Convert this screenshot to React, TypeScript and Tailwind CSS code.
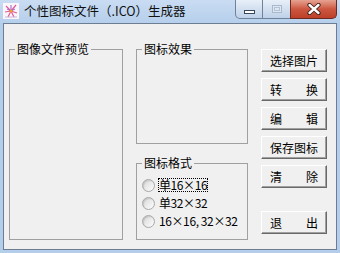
const buttons: { label: string[]; gapBefore?: boolean }[] = [
  { label: ['选择图片'] },
  { label: ['转', '换'] },
  { label: ['编', '辑'] },
  { label: ['保存图标'] },
  { label: ['清', '除'] },
  { label: ['退', '出'], gapBefore: true },
];

const radios = ['单16×16', '单32×32', '16×16, 32×32'];

function TitleIcon() {
  return (
    <svg width="16" height="16" viewBox="0 0 16 16">
      <rect width="16" height="16" fill="#fbf6f9" />
      <path d="M8 8 L3 3 M8 8 L13 2 M8 8 L2 9 M8 8 L14 10 M8 8 L5 14 M8 8 L11 14" stroke="#e05a9a" strokeWidth="1.2" />
      <path d="M8 8 L8 2 M8 8 L4 6 M8 8 L12 6" stroke="#9a5ad0" strokeWidth="1" />
      <circle cx="8" cy="8" r="1.6" fill="#f0a030" />
      <path d="M2 14 L14 14" stroke="#c9b6d8" strokeWidth="1" />
    </svg>
  );
}

function GroupBox({ title, className, children }: { title: string; className: string; children?: React.ReactNode }) {
  return (
    <fieldset className={`border border-[#a0a0a0] ${className}`}>
      <legend className="ml-[5px] px-[2px] text-[12px] leading-[14px]">{title}</legend>
      {children}
    </fieldset>
  );
}

export default function App() {
  return (
    <div className="w-[340px] h-[253px] overflow-hidden flex flex-col bg-[#b4cdeb] font-['Noto_Sans_CJK_SC',sans-serif] text-black">
      {/* Title bar */}
      <div className="h-[23px] flex items-start bg-gradient-to-b from-[#c9dcf2] to-[#b6cfec]">
        <div className="ml-[3px] mt-[3px]">
          <TitleIcon />
        </div>
        <span className="ml-[5px] mt-[3px] text-[12.5px] leading-[16px] text-[#101010]">
          个性图标文件（.ICO）生成器
        </span>
        <div className="ml-auto mr-[3px] flex h-[19px]">
          <div className="w-[28px] h-full rounded-bl-[5px] border border-t-0 border-[#6f829b] bg-gradient-to-b from-[#e8eff8] via-[#d3e0f0] to-[#bfd1e8] flex items-center justify-center">
            <span className="block w-[11px] h-[4px] mt-[5px] bg-white border border-[#38475a]" />
          </div>
          <div className="w-[27px] h-full border-b border-[#6f829b] bg-gradient-to-b from-[#e8eff8] via-[#d3e0f0] to-[#bfd1e8] flex items-center justify-center">
            <span className="block w-[10px] h-[8px] border border-[#a9b9cc] bg-[#dde7f3] p-[1px]">
              <span className="block w-full h-full border border-[#b5c3d3]" />
            </span>
          </div>
          <div className="w-[47px] h-full rounded-br-[5px] border border-t-0 border-[#6b2a20] bg-gradient-to-b from-[#e6a292] via-[#cc5640] to-[#bd4028] flex items-center justify-center">
            <svg width="14" height="12" viewBox="0 0 14 12">
              <path d="M2.5 2 L11.5 10 M11.5 2 L2.5 10" stroke="#3a1c18" strokeWidth="4.2" strokeLinecap="round" />
              <path d="M2.5 2 L11.5 10 M11.5 2 L2.5 10" stroke="#ffffff" strokeWidth="2.4" strokeLinecap="round" />
            </svg>
          </div>
        </div>
      </div>

      {/* Client area */}
      <div className="mx-[3px] mb-[3px] flex-1 border border-[#6d7d92] bg-[#f0f0f0] flex pl-[5px] pt-[18px] gap-[13px] text-[12px]">
        <GroupBox title="图像文件预览" className="w-[114px] h-[198px]" />

        <div className="w-[112px] flex flex-col gap-[12px]">
          <GroupBox title="图标效果" className="h-[102px]" />
          <GroupBox title="图标格式" className="h-[84px]">
            <div className="flex flex-col pl-[5px] pt-[6px]">
              {radios.map((r, i) => (
                <div key={r} className="h-[18px] flex items-center gap-[3px]">
                  <span className="block w-[13px] h-[13px] rounded-full border border-[#a8a8a8] bg-gradient-to-br from-[#d8d8d8] to-[#fdfdfd] shadow-[inset_1px_1px_1px_rgba(0,0,0,0.12)]" />
                  <span
                    className={`leading-[14px] px-[1px] tracking-[-0.4px] ${
                      i === 0 ? 'outline outline-1 outline-dotted outline-black -outline-offset-1' : ''
                    }`}
                  >
                    {r}
                  </span>
                </div>
              ))}
            </div>
          </GroupBox>
        </div>

        <div className="w-[66px] flex flex-col pt-[7px] gap-[6px]">
          {buttons.map((b) => (
            <button
              key={b.label.join('')}
              className={`h-[23px] flex items-center border border-t-white border-l-white border-r-[#696969] border-b-[#696969] shadow-[inset_-1px_-1px_0_#a0a0a0] bg-[#f0f0f0] text-[12px] leading-[14px] ${
                b.label.length > 1 ? 'justify-between px-[8px]' : 'justify-center'
              } ${b.gapBefore ? 'mt-[17px]' : ''}`}
            >
              {b.label.map((t) => (
                <span key={t}>{t}</span>
              ))}
            </button>
          ))}
        </div>
      </div>
    </div>
  );
}
